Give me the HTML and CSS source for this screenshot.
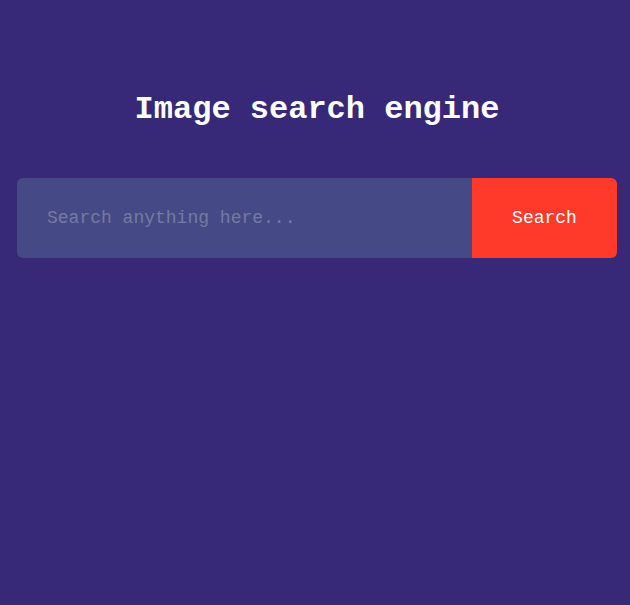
FILE: index.html
```html
<!DOCTYPE html>
<html>
<head>
<meta charset="utf-8">
<link rel="stylesheet" href="styles.css">
</head>
<body>
<main class="page">
  <h1 class="title">Image search engine</h1>
  <form class="search-form">
    <input class="search-input" type="text" placeholder="Search anything here...">
    <button class="search-button" type="button">Search</button>
  </form>
</main>
</body>
</html>
```
FILE: styles.css
```css
html, body {
  margin: 0;
  padding: 0;
  background: #382878;
  height: 100%;
}
body {
  font-family: "Liberation Mono", "Courier New", monospace;
  padding-left: 4px;
  box-sizing: border-box;
}
.page {
  width: 600px;
  margin: 0 auto;
  padding-top: 90px;
}
.title {
  margin: 0;
  text-align: center;
  color: #ffffff;
  font-size: 32px;
  font-weight: bold;
  line-height: 40px;
}
.search-form {
  display: flex;
  margin-top: 48px;
  height: 80px;
  border-radius: 6px;
  overflow: hidden;
}
.search-input {
  flex: 1;
  border: none;
  outline: none;
  background: #454a87;
  font-family: inherit;
  font-size: 18px;
  padding: 0 0 0 30px;
  color: #fff;
}
.search-input::placeholder {
  color: #767aa0;
}
.search-button {
  width: 145px;
  border: none;
  background: #ff3a2b;
  color: #ffffff;
  font-family: inherit;
  font-size: 18px;
  padding: 0;
}
```
